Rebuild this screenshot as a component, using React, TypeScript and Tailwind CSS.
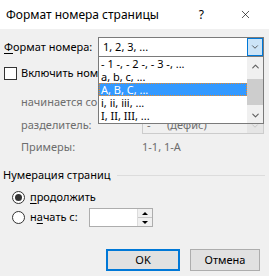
import { ChevronDown, ChevronUp, X } from "lucide-react";

const items = [
  "- 1 -, - 2 -, - 3 -, ...",
  "a, b, c, ...",
  "A, B, C, ...",
  "i, ii, iii, ...",
  "I, II, III, ...",
];

const Dropdown = () => (
  <div className="absolute left-[98px] top-[57px] w-[166px] h-[67px] bg-white border border-[#7a7a7a] border-t-0 flex">
    <div className="flex-1 flex flex-col">
      {items.map((item, i) => (
        <div
          key={item}
          className={
            i === 2
              ? "h-[13px] leading-[13px] pl-[2px] whitespace-nowrap text-white bg-[#3399ff] outline outline-1 outline-dotted outline-[#f08a24] -outline-offset-1"
              : "h-[13px] leading-[13px] pl-[2px] whitespace-nowrap text-black"
          }
        >
          {item}
        </div>
      ))}
    </div>
    <div className="w-[16px] bg-[#f0f0f0] flex flex-col items-center">
      <ChevronUp className="size-[11px] mt-[4px] text-[#606060]" strokeWidth={2.5} />
      <div className="w-[16px] h-[26px] bg-[#cdcdcd] mt-[7px]" />
      <ChevronDown className="size-[11px] mt-[5px] text-[#606060]" strokeWidth={2.5} />
    </div>
  </div>
);

const App = () => {
  return (
    <div className="relative w-[269px] h-[276px] bg-[#f0f0f0] overflow-hidden text-[11px] text-black whitespace-nowrap font-['Noto_Sans',sans-serif]">
      <div className="h-[29px] bg-white flex items-center pl-[6px] pr-[17px]">
        <span className="text-[12px] flex-1">Формат номера страницы</span>
        <span className="text-[12px] mr-[35px]">?</span>
        <X className="size-[13px]" strokeWidth={1.2} />
      </div>

      <div className="flex flex-col pl-[4px] pr-[5px]">
        <div className="flex items-center mt-[8px] h-[20px]">
          <span className="w-[94px]">
            <span className="underline underline-offset-2">Ф</span>ормат номера:
          </span>
          <div className="flex-1 h-[20px] bg-white border border-[#7a7a7a] flex items-center">
            <span className="flex-1 pl-[4px]">1, 2, 3, ...</span>
            <div className="w-[16px] h-[18px] bg-[#cce4f7] border border-[#0078d7] flex items-center justify-center">
              <ChevronDown className="size-[10px] text-[#404040]" strokeWidth={2} />
            </div>
          </div>
        </div>

        <div className="flex items-center mt-[10px] h-[13px]">
          <div className="w-[13px] h-[13px] bg-white border border-[#333333]" />
          <span className="ml-[4px] w-[77px] overflow-hidden">Включить номер главы</span>
        </div>

        <div className="flex flex-col pl-[17px] text-[#6d6d6d]">
          <div className="h-[16px] mt-[14px] leading-[16px] w-[77px] overflow-hidden">начинается со стиля</div>
          <div className="flex items-center mt-[7px] h-[17px]">
            <span className="w-[121px]">разделитель:</span>
            <div className="flex-1 h-[17px] border border-[#cccccc] bg-[#f0f0f0] flex items-center">
              <span className="pl-[4px] w-[24px]">-</span>
              <span className="flex-1">(дефис)</span>
              <div className="w-[16px] h-[15px] bg-[#e5e5e5] flex items-center justify-center">
                <ChevronDown className="size-[10px] text-[#bfbfbf]" strokeWidth={2} />
              </div>
            </div>
          </div>
          <div className="flex items-center mt-[5px] h-[16px]">
            <span className="w-[121px]">Примеры:</span>
            <span>1-1, 1-A</span>
          </div>
        </div>

        <div className="flex items-center mt-[12px] h-[16px] -ml-[1px]">
          <span>Нумерация страниц</span>
          <div className="flex-1 h-px bg-[#dcdcdc] ml-[6px] -mr-[1px]" />
        </div>

        <div className="flex items-center mt-[6px] h-[16px] pl-[8px]">
          <div className="w-[13px] h-[13px] rounded-full border border-[#333333] bg-white flex items-center justify-center">
            <div className="w-[7px] h-[7px] rounded-full bg-[#333333]" />
          </div>
          <span className="ml-[5px]">
            <span className="underline underline-offset-2">п</span>родолжить
          </span>
        </div>

        <div className="flex items-center mt-[3px] h-[19px] pl-[8px]">
          <div className="w-[13px] h-[13px] rounded-full border border-[#333333] bg-white" />
          <span className="ml-[5px] w-[59px]">
            н<span className="underline underline-offset-2">а</span>чать с:
          </span>
          <div className="w-[64px] h-[19px] bg-white border border-[#adadad] flex justify-end">
            <div className="w-[15px] h-full flex flex-col border-l border-[#dcdcdc]">
              <div className="flex-1 bg-[#f0f0f0] flex items-center justify-center border-b border-[#c8c8c8]">
                <div className="w-0 h-0 border-x-[3px] border-x-transparent border-b-[3px] border-b-black" />
              </div>
              <div className="flex-1 bg-[#f0f0f0] flex items-center justify-center">
                <div className="w-0 h-0 border-x-[3px] border-x-transparent border-t-[3px] border-t-black" />
              </div>
            </div>
          </div>
        </div>

        <div className="flex justify-end gap-[10px] mt-[22px] pr-[4px]">
          <button className="w-[74px] h-[22px] bg-[#e1e1e1] border-2 border-[#0078d7] text-black">OK</button>
          <button className="w-[70px] h-[22px] bg-[#e1e1e1] border border-[#adadad] text-black">Отмена</button>
        </div>
      </div>

      <Dropdown />
    </div>
  );
};

export default App;
